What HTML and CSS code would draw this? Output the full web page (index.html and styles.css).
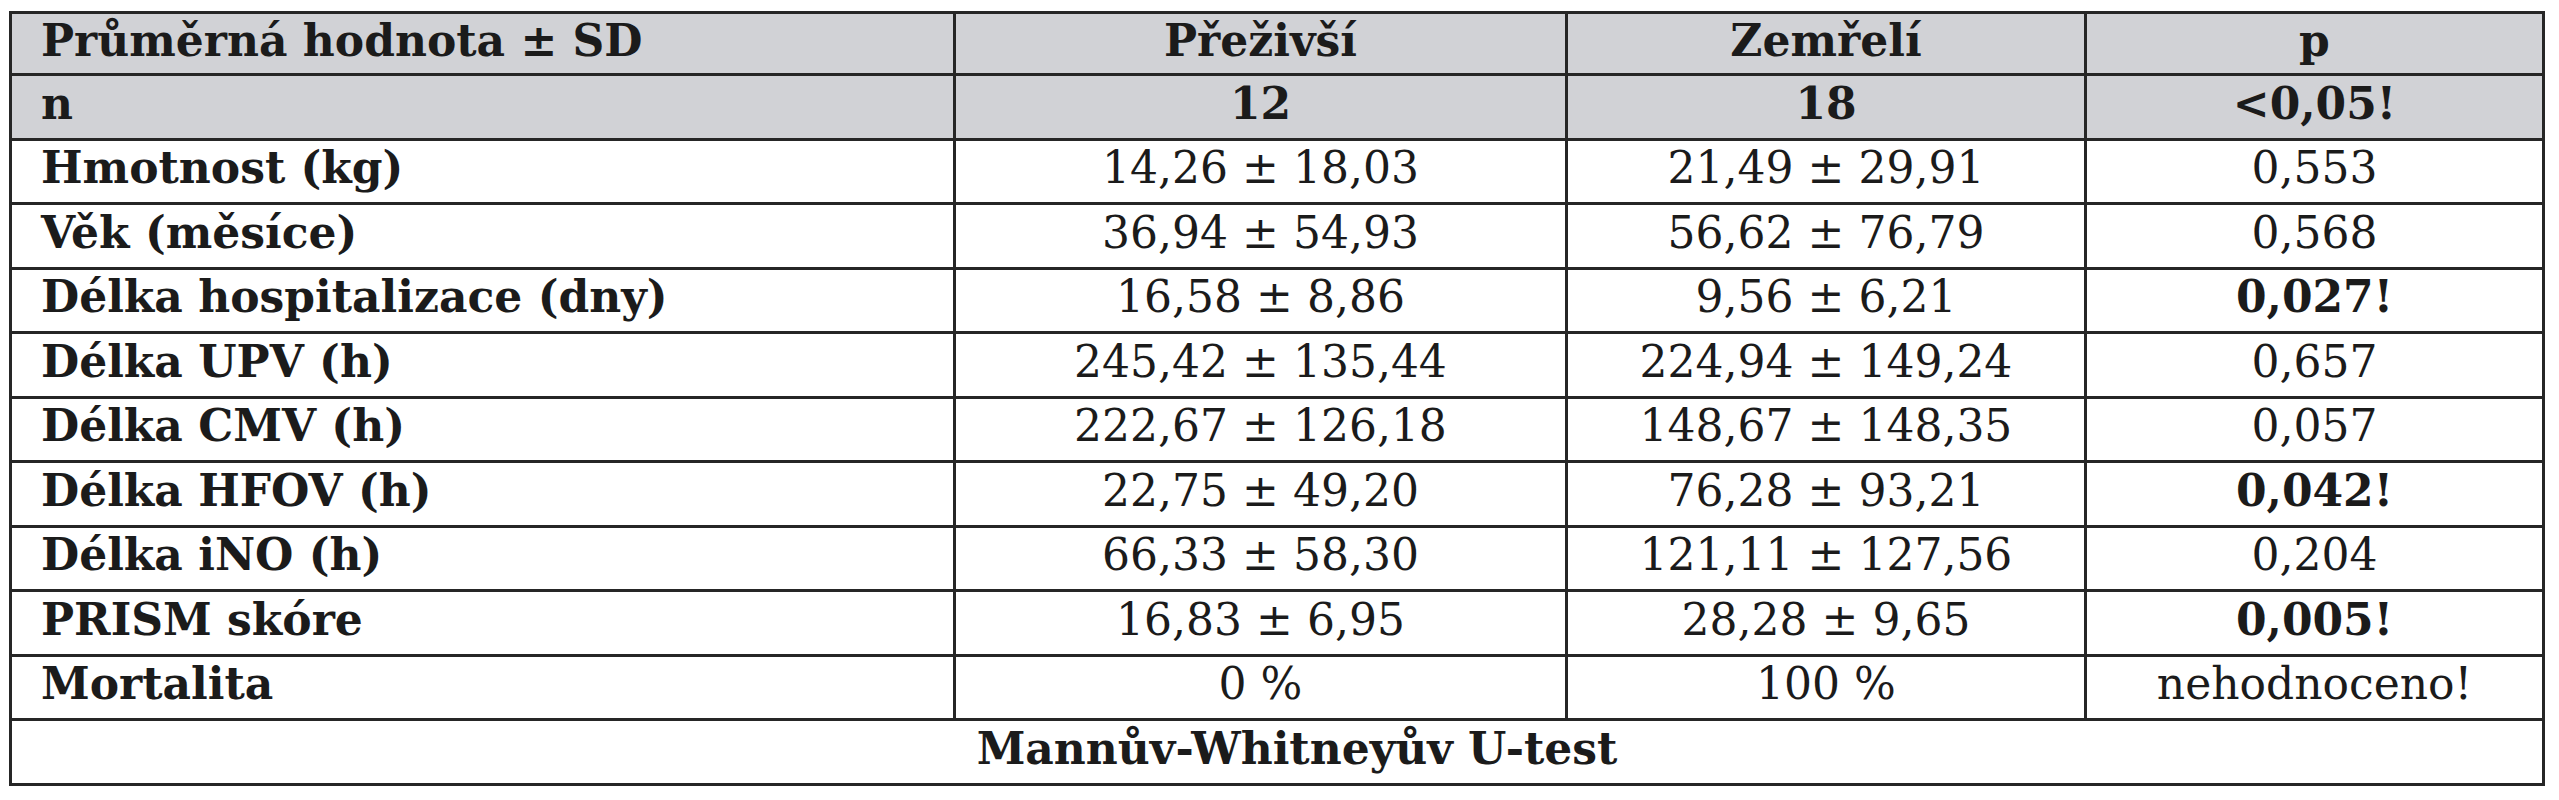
FILE: index.html
```html
<!DOCTYPE html>
<html lang="cs">
<head>
<meta charset="utf-8">
<title>Tabulka</title>
<link rel="stylesheet" href="styles.css">
</head>
<body>
<table class="stats">
  <colgroup>
    <col class="c1"><col class="c2"><col class="c3"><col class="c4">
  </colgroup>
  <tr class="head first">
    <th class="label">Průměrná hodnota ± SD</th>
    <th>Přeživší</th>
    <th>Zemřelí</th>
    <th>p</th>
  </tr>
  <tr class="head">
    <th class="label">n</th>
    <th>12</th>
    <th>18</th>
    <th>&lt;0,05!</th>
  </tr>
  <tr><th class="label">Hmotnost (kg)</th><td>14,26 ± 18,03</td><td>21,49 ± 29,91</td><td>0,553</td></tr>
  <tr><th class="label">Věk (měsíce)</th><td>36,94 ± 54,93</td><td>56,62 ± 76,79</td><td>0,568</td></tr>
  <tr><th class="label">Délka hospitalizace (dny)</th><td>16,58 ± 8,86</td><td>9,56 ± 6,21</td><td class="sig">0,027!</td></tr>
  <tr><th class="label">Délka UPV (h)</th><td>245,42 ± 135,44</td><td>224,94 ± 149,24</td><td>0,657</td></tr>
  <tr><th class="label">Délka CMV (h)</th><td>222,67 ± 126,18</td><td>148,67 ± 148,35</td><td>0,057</td></tr>
  <tr><th class="label">Délka HFOV (h)</th><td>22,75 ± 49,20</td><td>76,28 ± 93,21</td><td class="sig">0,042!</td></tr>
  <tr><th class="label">Délka iNO (h)</th><td>66,33 ± 58,30</td><td>121,11 ± 127,56</td><td>0,204</td></tr>
  <tr><th class="label">PRISM skóre</th><td>16,83 ± 6,95</td><td>28,28 ± 9,65</td><td class="sig">0,005!</td></tr>
  <tr><th class="label">Mortalita</th><td>0 %</td><td>100 %</td><td>nehodnoceno!</td></tr>
  <tr><th class="foot" colspan="4">Mannův-Whitneyův U-test</th></tr>
</table>
</body>
</html>
```

FILE: styles.css
```css
html, body {
  margin: 0;
  padding: 0;
  background: #ffffff;
}

body {
  padding: 11px 0 0 9px;
}

.stats {
  border-collapse: collapse;
  table-layout: fixed;
  width: 2536px;
  font-family: "DejaVu Serif", "Liberation Serif", serif;
  font-size: 44px;
  color: #1b1b1b;
  border: 3px solid #262626;
}

.c1 { width: 944px; }
.c2 { width: 612px; }
.c3 { width: 519px; }
.c4 { width: 458px; }

.stats th,
.stats td {
  border: 3px solid #262626;
  padding: 0 0 6px 0;
  text-align: center;
  vertical-align: middle;
  white-space: nowrap;
  line-height: 1;
}

.stats tr {
  height: 64.5px;
}

.stats tr.first {
  height: 62px;
}

.stats th {
  font-weight: bold;
}

.stats td {
  font-weight: normal;
}

.stats .label {
  text-align: left;
  padding-left: 29px;
}

.stats .head th {
  background: #d1d2d6;
}

.stats td.sig {
  font-weight: bold;
}

.stats .foot {
  text-align: center;
  padding-left: 40px;
}
```
